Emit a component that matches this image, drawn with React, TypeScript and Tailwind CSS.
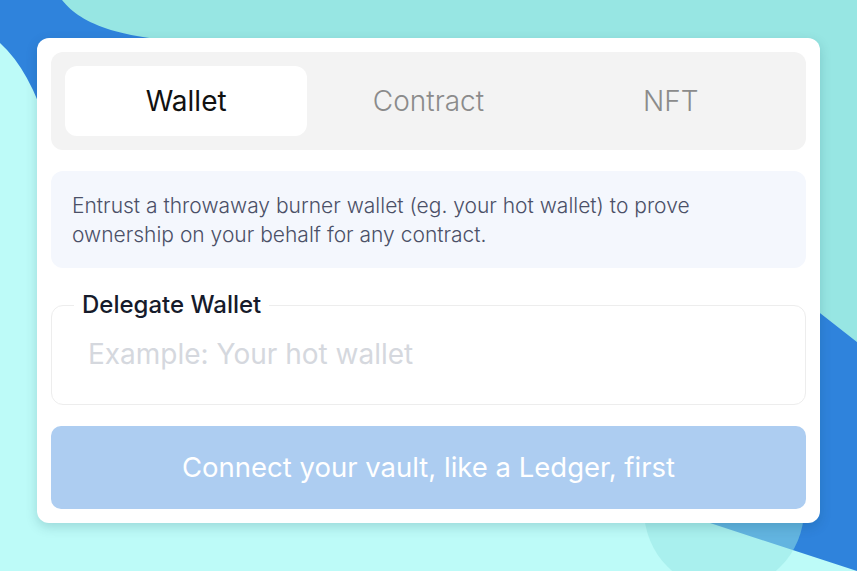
import { useState } from 'react';

const TABS = ['Wallet', 'Contract', 'NFT'];

function Backdrop() {
  return (
    <svg
      className="absolute inset-0 w-full h-full"
      viewBox="0 0 857 571"
      preserveAspectRatio="none"
    >
      <rect width="857" height="571" fill="#bdfbf8" />
      <path d="M0 0 L320 0 L320 220 L48 130 Q30 70 0 43 Z" fill="#2f83dc" />
      <path d="M62 0 L857 0 L857 342 L820 313 L220 44 C120 40 82 25 62 0 Z" fill="#97e6e3" />
      <path d="M500 63 L820 313 L857 342 L857 571 L710 523 L500 456 Z" fill="#2f83dc" />
      <circle cx="724" cy="510" r="80" fill="#96e5e3" fillOpacity="0.5" />
    </svg>
  );
}

export default function App() {
  const [tab, setTab] = useState('Wallet');
  const [value, setValue] = useState('');

  return (
    <div
      className="relative w-[857px] h-[571px] overflow-hidden"
      style={{ fontFamily: 'Inter, "Noto Sans", sans-serif' }}
    >
      <Backdrop />

      <div className="relative ml-[37px] mt-[38px] w-[783px] h-[485px] bg-white rounded-xl shadow-[0_4px_12px_rgba(0,60,80,0.18)] p-[14px] flex flex-col">
        {/* Tabs */}
        <div className="grid grid-cols-3 bg-[#f3f3f3] rounded-xl p-[14px] h-[98px]">
          {TABS.map((t) => (
            <button
              key={t}
              onClick={() => setTab(t)}
              className={`rounded-xl text-[28px] ${
                tab === t ? 'bg-white text-[#111111]' : 'text-[#8b8b8b] font-light'
              }`}
            >
              {t}
            </button>
          ))}
        </div>

        {/* Info */}
        <div className="mt-[21px] h-[97px] bg-[#f4f7fd] rounded-xl px-[21px] pt-[20px] text-[21px] leading-[29px] text-[#4b5067] font-light">
          Entrust a throwaway burner wallet (eg. your hot wallet) to prove ownership on your behalf for any contract.
        </div>

        {/* Delegate field */}
        <fieldset className="mt-[22px] h-[115px] border border-[#ededed] rounded-xl px-[22px]">
          <legend className="px-[8px] text-[24px] font-medium text-[#161b2b] leading-[30px]">
            Delegate Wallet
          </legend>
          <input
            value={value}
            onChange={(e) => setValue(e.target.value)}
            placeholder="Example: Your hot wallet"
            className="w-full mt-[13px] pl-[14px] text-[28px] outline-none bg-transparent placeholder:text-[#d5d8de]"
          />
        </fieldset>

        {/* Action */}
        <button
          disabled
          className="mt-[21px] h-[83px] w-full rounded-[10px] bg-[#adcdf1] text-white text-[27.5px]"
        >
          Connect your vault, like a Ledger, first
        </button>
      </div>
    </div>
  );
}
